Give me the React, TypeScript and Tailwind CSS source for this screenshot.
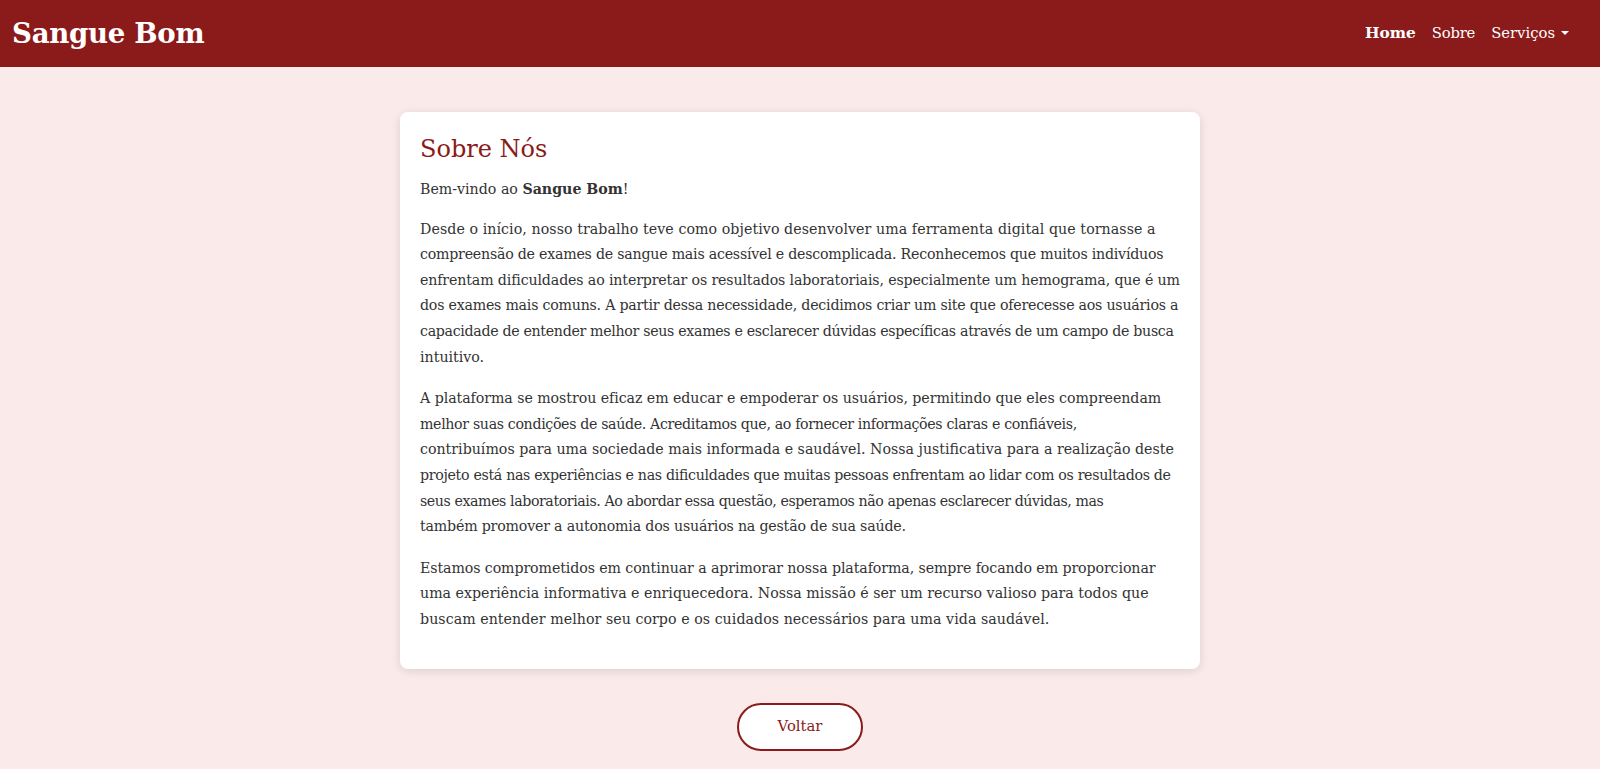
import { useState } from "react";

const serif = { fontFamily: '"DejaVu Serif", Georgia, serif' };

type Line = { text: string; fit: string };

// Lines kept as in the original layout; "fit" trims each one to its original width
const paragraphs: Line[][] = [
  [
    { text: "Desde o início, nosso trabalho teve como objetivo desenvolver uma ferramenta digital que tornasse a", fit: "tracking-[0.07px]" },
    { text: "compreensão de exames de sangue mais acessível e descomplicada. Reconhecemos que muitos indivíduos", fit: "tracking-[-0.23px]" },
    { text: "enfrentam dificuldades ao interpretar os resultados laboratoriais, especialmente um hemograma, que é um", fit: "tracking-[-0.14px]" },
    { text: "dos exames mais comuns. A partir dessa necessidade, decidimos criar um site que oferecesse aos usuários a", fit: "tracking-[-0.23px]" },
    { text: "capacidade de entender melhor seus exames e esclarecer dúvidas específicas através de um campo de busca", fit: "tracking-[-0.32px]" },
    { text: "intuitivo.", fit: "" },
  ],
  [
    { text: "A plataforma se mostrou eficaz em educar e empoderar os usuários, permitindo que eles compreendam", fit: "tracking-[-0.06px]" },
    { text: "melhor suas condições de saúde. Acreditamos que, ao fornecer informações claras e confiáveis,", fit: "tracking-[-0.35px]" },
    { text: "contribuímos para uma sociedade mais informada e saudável. Nossa justificativa para a realização deste", fit: "" },
    { text: "projeto está nas experiências e nas dificuldades que muitas pessoas enfrentam ao lidar com os resultados de", fit: "tracking-[-0.32px]" },
    { text: "seus exames laboratoriais. Ao abordar essa questão, esperamos não apenas esclarecer dúvidas, mas", fit: "tracking-[-0.42px]" },
    { text: "também promover a autonomia dos usuários na gestão de sua saúde.", fit: "tracking-[-0.19px]" },
  ],
  [
    { text: "Estamos comprometidos em continuar a aprimorar nossa plataforma, sempre focando em proporcionar", fit: "tracking-[-0.1px]" },
    { text: "uma experiência informativa e enriquecedora. Nossa missão é ser um recurso valioso para todos que", fit: "" },
    { text: "buscam entender melhor seu corpo e os cuidados necessários para uma vida saudável.", fit: "tracking-[0.05px]" },
  ],
];

const NavBar = () => {
  const [open, setOpen] = useState(false);

  return (
    <nav className="bg-[#8b1a1a] h-[67px] flex items-center justify-between pl-3 pr-[23px]">
      <a href="#" className="text-white font-bold text-[27.6px] tracking-[-0.3px]">
        Sangue Bom
      </a>
      <ul className="flex items-center text-white text-[14.8px]">
        <li>
          <a href="#" className="px-2 font-bold text-[15.4px]">Home</a>
        </li>
        <li>
          <a href="#" className="px-2 tracking-[-0.2px]">Sobre</a>
        </li>
        <li className="relative">
          <button
            onClick={() => setOpen(!open)}
            className="px-2 flex items-center gap-[6px]"
          >
            Serviços
            <span className="border-x-[4px] border-x-transparent border-t-[4.5px] border-t-white" />
          </button>
          {open && (
            <div className="absolute right-0 top-8 bg-white text-gray-800 rounded shadow-md py-2 w-44 z-10">
              <a href="#" className="block px-4 py-1 hover:bg-gray-100">Hemograma</a>
              <a href="#" className="block px-4 py-1 hover:bg-gray-100">Busca</a>
            </div>
          )}
        </li>
      </ul>
    </nav>
  );
};

export default function App() {
  return (
    <div className="min-h-screen bg-[#fbeaea]" style={serif}>
      <NavBar />

      <main className="flex flex-col items-center pt-[45px] pb-10">
        {/* Sobre card */}
        <section className="w-[800px] bg-white rounded-lg shadow-[0_2px_10px_rgba(0,0,0,0.12)] p-5 text-[#333] text-[14.2px] leading-[25.6px]">
          <h1 className="text-[#8b1a1a] text-[24px] leading-[34px] mb-[11px]">Sobre Nós</h1>
          <p className="mb-[14px]">
            Bem-vindo ao <strong>Sangue Bom</strong>!
          </p>
          {paragraphs.map((lines, i) => (
            <p key={i} className="mb-4 whitespace-nowrap">
              {lines.map((line, j) => (
                <span key={j} className={line.fit}>
                  {line.text}
                  {j < lines.length - 1 && <br />}
                </span>
              ))}
            </p>
          ))}
        </section>

        <button className="mt-[34px] w-[126px] h-[48px] rounded-full border-2 border-[#8b1a1a] bg-white text-[#8b1a1a] text-[14.8px]">
          Voltar
        </button>
      </main>
    </div>
  );
}
